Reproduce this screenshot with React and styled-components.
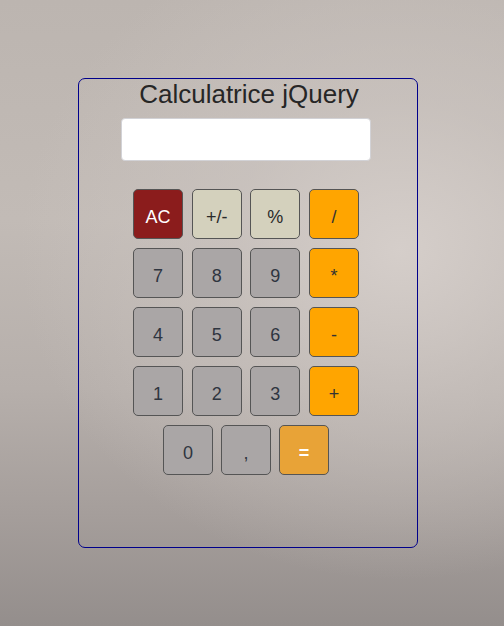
import React from "react";
import styled, { createGlobalStyle } from "styled-components";

const Global = createGlobalStyle`
  html, body { margin: 0; padding: 0; }
  body {
    font-family: "Liberation Sans", Arial, sans-serif;
    background: #a9a29f;
  }
`;

const Page = styled.div`
  min-height: 626px;
  padding: 78px 0 0 78px;
  box-sizing: border-box;
  background:
    radial-gradient(ellipse 380px 330px at 400px 250px, rgba(214,207,203,0.95) 0%, rgba(205,198,194,0.6) 45%, rgba(190,182,178,0) 100%),
    linear-gradient(180deg, #bcb5b0 0%, #c2bbb6 35%, #b6afab 62%, #a59e9b 82%, #948e8c 100%);
`;

const Calculator = styled.div`
  width: 340px;
  height: 470px;
  box-sizing: border-box;
  border: 1px solid #00008b;
  border-radius: 7px;
  display: flex;
  flex-direction: column;
  align-items: center;
`;

const Title = styled.h1`
  margin: 0;
  padding-top: 1px;
  font-size: 26px;
  font-weight: normal;
  line-height: 28px;
  color: #262626;
  margin-left: 2px;
`;

const Screen = styled.input`
  margin-top: 10px;
  margin-left: -4px;
  width: 250px;
  height: 43px;
  box-sizing: border-box;
  border: 1px solid #d2d2d6;
  border-radius: 4px;
  background: #fff;
  outline: none;
`;

const Keypad = styled.div`
  margin-top: 28px;
  margin-left: -4px;
  display: flex;
  flex-direction: column;
  align-items: center;
  gap: 9px;
`;

const Row = styled.div`
  display: flex;
  column-gap: ${(p) => (p.$last ? "8px" : "8.67px")};
`;

const palette = {
  clear: { bg: "#8b1c1c", fg: "#ffffff" },
  func: { bg: "#d4d1bd", fg: "#2a2a2a" },
  digit: { bg: "#aaa6a6", fg: "#2f3540" },
  op: { bg: "#ffa500", fg: "#333333" },
  eq: { bg: "#e8a337", fg: "#ffffff" },
};

const Key = styled.button`
  width: 50px;
  height: 50px;
  box-sizing: border-box;
  padding: 6px 0 0;
  border: 1px solid #555555;
  border-radius: 5px;
  background: ${(p) => palette[p.$kind].bg};
  color: ${(p) => palette[p.$kind].fg};
  font-family: "Liberation Sans", Arial, sans-serif;
  font-size: 18px;
  font-weight: ${(p) => (p.$kind === "eq" ? "bold" : "normal")};
  cursor: pointer;
`;

const rows = [
  [["AC", "clear"], ["+/-", "func"], ["%", "func"], ["/", "op"]],
  [["7", "digit"], ["8", "digit"], ["9", "digit"], ["*", "op"]],
  [["4", "digit"], ["5", "digit"], ["6", "digit"], ["-", "op"]],
  [["1", "digit"], ["2", "digit"], ["3", "digit"], ["+", "op"]],
  [["0", "digit"], [",", "digit"], ["=", "eq"]],
];

export default function App() {
  return (
    <>
      <Global />
      <Page>
        <Calculator>
          <Title>Calculatrice jQuery</Title>
          <Screen type="text" readOnly />
          <Keypad>
            {rows.map((r, i) => (
              <Row key={i} $last={i === rows.length - 1}>
                {r.map(([label, kind]) => (
                  <Key key={label} $kind={kind}>
                    {label}
                  </Key>
                ))}
              </Row>
            ))}
          </Keypad>
        </Calculator>
      </Page>
    </>
  );
}
